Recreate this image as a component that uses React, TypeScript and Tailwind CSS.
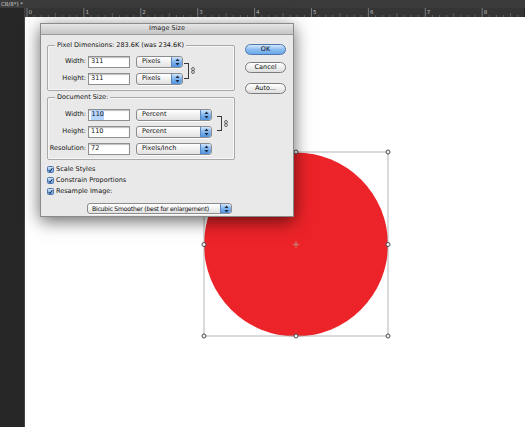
import React from 'react';

const font = "font-['DejaVu_Sans',_'Liberation_Sans',_sans-serif]";

const Stepper: React.FC = () => (
  <div className="w-[11px] h-full shrink-0 rounded-r-[3px] border-l border-[#5b85bd] bg-gradient-to-b from-[#cfe4fb] via-[#7fb4ec] to-[#4f93e0] flex items-center justify-center">
    <svg width="5" height="8" viewBox="0 0 5 8">
      <path d="M2.5 0.5 L4.5 3 L0.5 3 Z" fill="#1d2a40" />
      <path d="M2.5 7.5 L4.5 5 L0.5 5 Z" fill="#1d2a40" />
    </svg>
  </div>
);

const Select: React.FC<{ label: string; w: string; h?: string; tight?: boolean }> = ({
  label,
  w,
  h = 'h-[12px]',
  tight,
}) => (
  <div className={`${w} ${h} flex items-stretch rounded-[3px] border border-[#8c8c8c] bg-gradient-to-b from-white to-[#e2e2e2] shadow-[0_1px_0_rgba(255,255,255,0.8)]`}>
    <span
      className={`flex-1 flex items-center whitespace-nowrap overflow-hidden ${
        tight ? 'pl-[4px] text-[6.2px] tracking-[-0.25px]' : 'pl-[5px]'
      }`}
    >
      {label}
    </span>
    <Stepper />
  </div>
);

const Input: React.FC<{ value: string; selected?: boolean }> = ({ value, selected }) => (
  <div className="w-[42px] h-[12px] bg-white border border-[#8f8f8f] shadow-[inset_0_1px_1px_rgba(0,0,0,0.25)] flex items-center pl-[2px]">
    <span className={selected ? 'bg-[#b5d4fe] px-[0.5px]' : ''}>{value}</span>
  </div>
);

const Row: React.FC<{ label: string; value: string; unit: string; selW: string; selected?: boolean }> = ({
  label,
  value,
  unit,
  selW,
  selected,
}) => (
  <div className="flex items-center h-[12px]">
    <span className="w-[39px] text-right pr-[1px] whitespace-nowrap">{label}</span>
    <div className="ml-[1px]">
      <Input value={value} selected={selected} />
    </div>
    <div className="ml-[6px]">
      <Select label={unit} w={selW} />
    </div>
  </div>
);

const Chain: React.FC = () => (
  <svg width="4" height="7" viewBox="0 0 4 7" className="ml-[2px]">
    <rect x="0.6" y="0.5" width="2.8" height="3" rx="1.4" fill="none" stroke="#444" strokeWidth="0.8" />
    <rect x="0.6" y="3.5" width="2.8" height="3" rx="1.4" fill="none" stroke="#444" strokeWidth="0.8" />
  </svg>
);

const Bracket: React.FC<{ h: string }> = ({ h }) => (
  <div className="flex items-center ml-[1px]">
    <div className={`w-[5px] ${h} border-t border-r border-b border-[#3a3a3a]`} />
    <Chain />
  </div>
);

const Group: React.FC<{ legend: string; h: string; pt: string; children: React.ReactNode }> = ({
  legend,
  h,
  pt,
  children,
}) => (
  <div className={`relative w-[188px] ${h} ${pt} border border-[#a9a9a9] rounded-[2px] shadow-[inset_0_0_0_1px_rgba(255,255,255,0.6)]`}>
    <span className="absolute -top-[5px] left-[7px] px-[2px] bg-[#e9e9e9] leading-[9px] whitespace-nowrap">{legend}</span>
    {children}
  </div>
);

const Check: React.FC<{ label: string }> = ({ label }) => (
  <div className="flex items-center h-[11px]">
    <div className="w-[7px] h-[7px] rounded-[1.5px] border border-[#4a75ad] bg-gradient-to-b from-[#d3e6fb] to-[#5e9fe4] flex items-center justify-center">
      <svg width="6" height="6" viewBox="0 0 6 6">
        <path d="M1 3.2 L2.4 4.8 L5.2 0.8" fill="none" stroke="#17233a" strokeWidth="1.2" />
      </svg>
    </div>
    <span className="ml-[2px] whitespace-nowrap">{label}</span>
  </div>
);

const Button: React.FC<{ label: string; primary?: boolean }> = ({ label, primary }) => (
  <div
    className={`w-[41px] h-[11px] rounded-full border flex items-center justify-center ${
      primary
        ? 'border-[#4f76ad] bg-gradient-to-b from-[#d5e8fc] via-[#8cbdf0] to-[#6aa8ea]'
        : 'border-[#7d7d7d] bg-gradient-to-b from-white to-[#dedede]'
    }`}
  >
    {label}
  </div>
);

const Ruler: React.FC = () => {
  const ticks = [];
  for (let i = 0; i < 9; i++) {
    const x = 2 + i * 56.9;
    ticks.push(<line key={`m${i}`} x1={x} y1={0} x2={x} y2={9} stroke="#8a8a8a" strokeWidth="0.8" />);
    ticks.push(
      <text key={`t${i}`} x={x + 1.5} y={5.5} fontSize="5.5" fill="#bdbdbd" fontFamily="DejaVu Sans, sans-serif">
        {i}
      </text>
    );
    for (let j = 1; j < 8; j++) {
      const tx = x + (56.9 / 8) * j;
      const len = j === 4 ? 4 : 2;
      ticks.push(<line key={`s${i}-${j}`} x1={tx} y1={9 - len} x2={tx} y2={9} stroke="#7a7a7a" strokeWidth="0.6" />);
    }
  }
  return (
    <svg width="499" height="9" className="block bg-[#353535]">
      {ticks}
    </svg>
  );
};

const handles: [number, number][] = [
  [179, 135],
  [271, 135],
  [363, 135],
  [179, 227.5],
  [363, 227.5],
  [179, 319],
  [271, 319],
  [363, 319],
];

const Artwork: React.FC = () => (
  <svg width="499" height="410" className="absolute left-0 top-0">
    <circle cx="271" cy="227.5" r="92" fill="#ec2328" />
    <rect x="179" y="135" width="184" height="184" fill="none" stroke="#a3a3a3" strokeWidth="0.8" />
    {handles.map(([x, y], i) => (
      <circle key={i} cx={x} cy={y} r="2" fill="#f4f4f4" stroke="#4a4a4a" strokeWidth="1" />
    ))}
    <g stroke="#c87a6a" strokeWidth="0.8" fill="none">
      <circle cx="271" cy="227.5" r="1.6" />
      <line x1="267.5" y1="227.5" x2="274.5" y2="227.5" />
      <line x1="271" y1="224" x2="271" y2="231" />
    </g>
  </svg>
);

const Dialog: React.FC = () => (
  <div className="absolute left-[15px] top-[6px] w-[254px] h-[194px] bg-[#e9e9e9] border border-[#8a8a8a] shadow-[0_4px_16px_rgba(0,0,0,0.6)] flex flex-col text-[6.5px] text-[#111]">
    <div className="h-[11px] bg-gradient-to-b from-[#e6e6e6] to-[#c6c6c6] border-b border-[#9a9a9a] flex items-center justify-center text-[#222]">
      Image Size
    </div>
    <div className="flex">
      <div className="pl-[6px] flex flex-col">
        <div className="mt-[10px]">
          <Group legend="Pixel Dimensions:  283.6K (was 234.6K)" h="h-[46px]" pt="pt-[10px]">
            <div className="flex items-center">
              <div className="flex flex-col gap-[5px]">
                <Row label="Width:" value="311" unit="Pixels" selW="w-[47px]" />
                <Row label="Height:" value="311" unit="Pixels" selW="w-[47px]" />
              </div>
              <Bracket h="h-[16px]" />
            </div>
          </Group>
        </div>
        <div className="mt-[6px]">
          <Group legend="Document Size:" h="h-[63px]" pt="pt-[11px]">
            <div className="flex flex-col gap-[5px]">
              <div className="flex items-center">
                <div className="flex flex-col gap-[5px]">
                  <Row label="Width:" value="110" unit="Percent" selW="w-[76px]" selected />
                  <Row label="Height:" value="110" unit="Percent" selW="w-[76px]" />
                </div>
                <div className="ml-[4px]">
                  <Bracket h="h-[15px]" />
                </div>
              </div>
              <Row label="Resolution:" value="72" unit="Pixels/Inch" selW="w-[76px]" />
            </div>
          </Group>
        </div>
        <div className="mt-[4px] flex flex-col">
          <Check label="Scale Styles" />
          <Check label="Constrain Proportions" />
          <Check label="Resample Image:" />
        </div>
        <div className="mt-[6px] ml-[40px]">
          <Select label="Bicubic Smoother (best for enlargement)" w="w-[145px]" h="h-[11px]" tight />
        </div>
      </div>
      <div className="ml-[10px] pt-[9px] flex flex-col">
        <Button label="OK" primary />
        <div className="mt-[7px]">
          <Button label="Cancel" />
        </div>
        <div className="mt-[10px]">
          <Button label="Auto..." />
        </div>
      </div>
    </div>
  </div>
);

export default function App() {
  return (
    <div className={`w-[525px] h-[427px] overflow-hidden bg-[#282828] flex flex-col ${font}`}>
      <div className="h-[8px] bg-[#3b3b3b] flex items-center">
        <span className="pl-[1px] text-[5.5px] leading-[8px] text-[#cfcfcf] whitespace-nowrap">C8/8*) *</span>
      </div>
      <div className="flex-1 flex min-h-0">
        <div className="w-[25px] bg-[#272727] border-r border-[#444]" />
        <div className="flex-1 flex flex-col min-w-0">
          <Ruler />
          <div className="relative flex-1 bg-white">
            <Artwork />
            <Dialog />
          </div>
        </div>
      </div>
    </div>
  );
}
